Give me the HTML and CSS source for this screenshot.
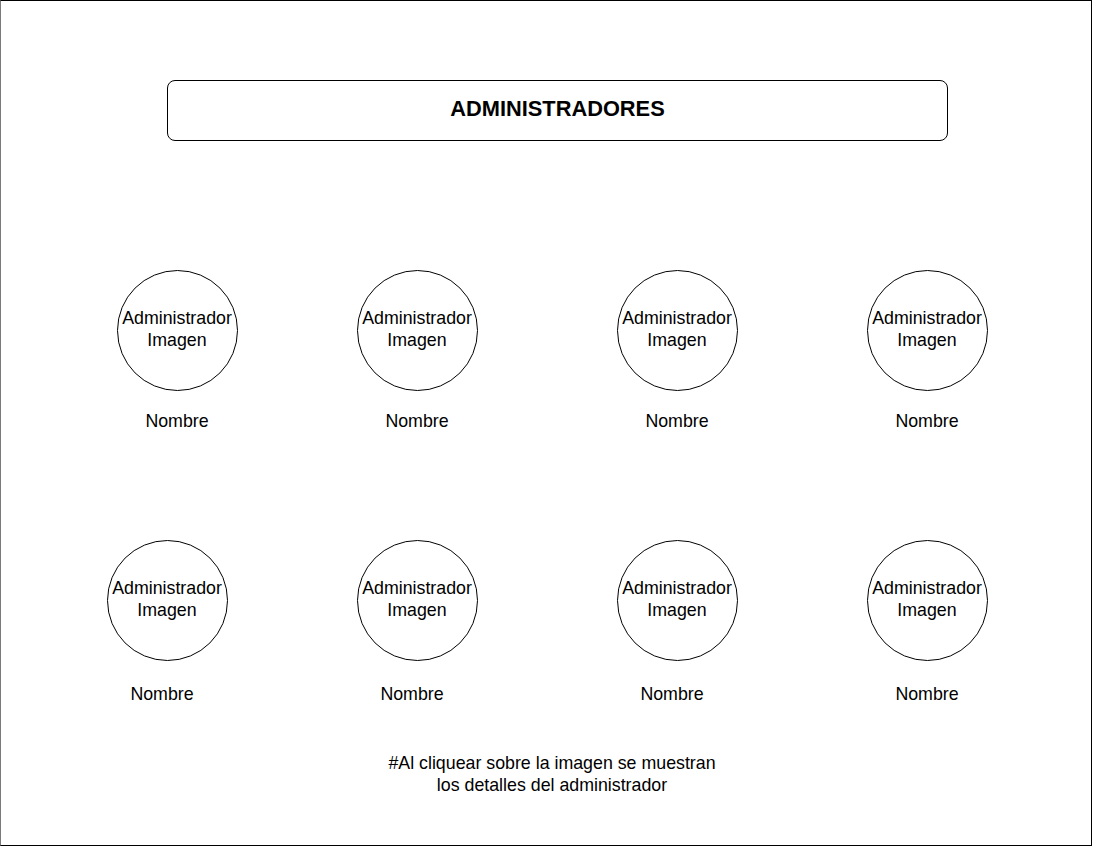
FILE: index.html
```html
<!DOCTYPE html>
<html lang="es">
<head>
<meta charset="utf-8">
<title>Administradores</title>
<link rel="stylesheet" href="styles.css">
</head>
<body>
<div class="frame">
  <div class="title-box">ADMINISTRADORES</div>

  <div class="row row-one">
    <div class="cell">
      <div class="avatar">Administrador<br>Imagen</div>
      <div class="name">Nombre</div>
    </div>
    <div class="cell gap-120">
      <div class="avatar">Administrador<br>Imagen</div>
      <div class="name">Nombre</div>
    </div>
    <div class="cell gap-140">
      <div class="avatar">Administrador<br>Imagen</div>
      <div class="name">Nombre</div>
    </div>
    <div class="cell gap-130">
      <div class="avatar">Administrador<br>Imagen</div>
      <div class="name">Nombre</div>
    </div>
  </div>

  <div class="row row-two">
    <div class="cell">
      <div class="avatar">Administrador<br>Imagen</div>
      <div class="name shift-left">Nombre</div>
    </div>
    <div class="cell gap-130">
      <div class="avatar">Administrador<br>Imagen</div>
      <div class="name shift-left">Nombre</div>
    </div>
    <div class="cell gap-140">
      <div class="avatar">Administrador<br>Imagen</div>
      <div class="name shift-left">Nombre</div>
    </div>
    <div class="cell gap-130">
      <div class="avatar">Administrador<br>Imagen</div>
      <div class="name">Nombre</div>
    </div>
  </div>

  <div class="note">#Al cliquear sobre la imagen se muestran<br>los detalles del administrador</div>
</div>
</body>
</html>
```

FILE: styles.css
```css
html, body {
  margin: 0;
  padding: 0;
  background: #ffffff;
  overflow: hidden;
}

.frame {
  box-sizing: border-box;
  width: 1092px;
  height: 846px;
  border: 1px solid #000000;
  border-left-color: #7a7a7a;
  padding-top: 79px;
  font-family: "Liberation Sans", Arial, Helvetica, sans-serif;
  color: #000000;
}

.title-box {
  box-sizing: border-box;
  width: 781px;
  height: 61px;
  margin-left: 166px;
  border: 1px solid #000000;
  border-radius: 8px;
  font-size: 21.8px;
  font-weight: bold;
  text-align: center;
  line-height: 55px;
  padding-bottom: 4px;
}

.row {
  display: flex;
  align-items: flex-start;
}

.row-one {
  margin-top: 129px;
  padding-left: 116px;
}

.row-two {
  margin-top: 108px;
  padding-left: 106px;
}

.cell {
  width: 120px;
  display: flex;
  flex-direction: column;
  align-items: center;
}

.gap-120 { margin-left: 120px; }
.gap-130 { margin-left: 130px; }
.gap-140 { margin-left: 140px; }

.avatar {
  box-sizing: border-box;
  width: 121px;
  height: 121px;
  border: 1px solid #000000;
  border-radius: 50%;
  display: flex;
  align-items: center;
  justify-content: center;
  text-align: center;
  font-size: 17.8px;
  line-height: 22px;
  padding-bottom: 4px;
  white-space: nowrap;
}

.name {
  margin-top: 19px;
  font-size: 17.8px;
  line-height: 22px;
  white-space: nowrap;
}

.row-two .name {
  margin-top: 22px;
}

.shift-left {
  margin-right: 10px;
}

.note {
  width: 400px;
  margin-top: 47px;
  margin-left: 351px;
  text-align: center;
  font-size: 17.8px;
  line-height: 22px;
}
```
